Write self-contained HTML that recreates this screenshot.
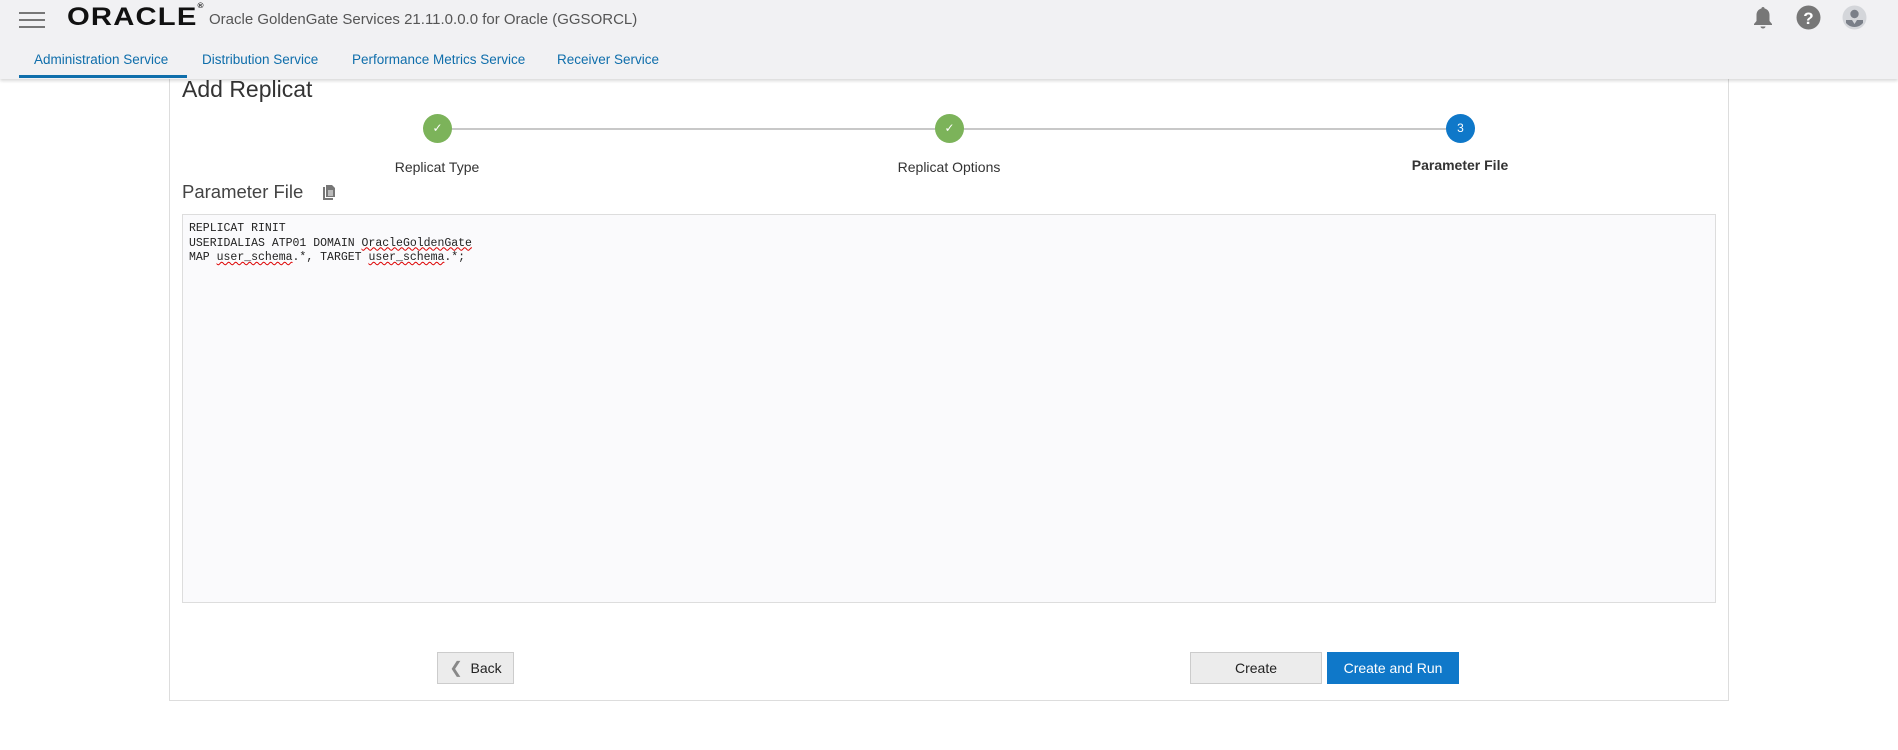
<!DOCTYPE html>
<html><head><meta charset="utf-8"><style>
*{box-sizing:border-box;margin:0;padding:0}
body{width:1898px;height:750px;background:#fff;font-family:"Liberation Sans",sans-serif;position:relative;overflow:hidden;color:#333}
.hdr{position:absolute;left:0;top:0;width:1898px;height:79px;background:#f1f1f3;box-shadow:0 2px 3px rgba(0,0,0,.15);z-index:2}
.abs{position:absolute}
.tab{position:absolute;top:52px;font-size:13.5px;color:#0f6eab;white-space:nowrap}
.panel{position:absolute;left:169px;top:60px;width:1560px;height:641px;border:1px solid #ddd;background:#fff}
.circ{position:absolute;width:29px;height:29px;border-radius:50%;top:114px;color:#fff;font-size:12px;text-align:center;line-height:29px}
.lbl{position:absolute;top:159px;font-size:14px;color:#333;transform:translateX(-50%);white-space:nowrap}
.ta{position:absolute;left:182px;top:214px;width:1534px;height:389px;border:1px solid #ddd;background:#fafafc;font-family:"Liberation Mono",monospace;font-size:11.5px;line-height:14.5px;padding:7px 6px;color:#222}
.sq{text-decoration:underline wavy #d00;text-decoration-thickness:1px}
.btn{position:absolute;top:652px;height:32px;font-size:14px;text-align:center;line-height:31px;border:1px solid #ccc;background:#ececec;color:#222}
</style></head><body>
<div class="hdr">
 <div class="abs" style="left:19px;top:12px;width:26px">
  <div style="height:2px;background:#777;margin-top:0"></div><div style="height:2px;background:#777;margin-top:5px"></div><div style="height:2px;background:#777;margin-top:5px"></div>
 </div>
 <div class="abs" style="left:67px;top:3px;font-size:25px;font-weight:bold;letter-spacing:1px;color:#111;transform:scaleX(1.17);transform-origin:left">ORACLE<span style="font-size:7px;vertical-align:top">®</span></div>
 <div class="abs" style="left:209px;top:11px;font-size:15px;color:#555">Oracle GoldenGate Services 21.11.0.0.0 for Oracle (GGSORCL)</div>
 <div class="tab" style="left:34px">Administration Service</div>
 <div class="tab" style="left:202px">Distribution Service</div>
 <div class="tab" style="left:352px">Performance Metrics Service</div>
 <div class="tab" style="left:557px">Receiver Service</div>
 <div class="abs" style="left:19px;top:75px;width:168px;height:3px;background:#0f6eab"></div>
 <svg class="abs" style="left:1751px;top:5px" width="24" height="26" viewBox="0 0 24 26"><path d="M12 2c-1 0-1.6.7-1.6 1.5C7 4.4 5.5 7 5.5 10v6L3 19v1h18v-1l-2.5-3v-6c0-3-1.5-5.6-4.9-6.5C13.6 2.7 13 2 12 2z" fill="#777"/><path d="M9.5 21.5a2.5 2 0 0 0 5 0z" fill="#777"/></svg>
 <svg class="abs" style="left:1796px;top:5px" width="25" height="25" viewBox="0 0 25 25"><circle cx="12.5" cy="12.5" r="12" fill="#777"/><text x="12.5" y="19" text-anchor="middle" font-family="Liberation Sans" font-weight="bold" font-size="17" fill="#fff">?</text></svg>
 <svg class="abs" style="left:1842px;top:5px" width="25" height="25" viewBox="0 0 25 25"><circle cx="12.5" cy="12.5" r="12" fill="#d4d6da"/><circle cx="12.5" cy="9" r="4.2" fill="#7a7f88"/><path d="M4 15h6l2.5 4 2.5-4h6v3a11 11 0 0 1-17 0z" fill="#7a7f88"/></svg>
</div>
<div class="panel"></div>
<div class="abs" style="left:182px;top:76px;font-size:23px;color:#333">Add Replicat</div>
<div class="abs" style="left:451px;top:128px;width:998px;height:2px;background:#c8c8c8"></div>
<div class="circ" style="left:423px;background:#7cb35a">✓</div>
<div class="circ" style="left:935px;background:#7cb35a">✓</div>
<div class="circ" style="left:1446px;background:#0f78c9">3</div>
<div class="lbl" style="left:437px">Replicat Type</div>
<div class="lbl" style="left:949px">Replicat Options</div>
<div class="lbl" style="left:1460px;top:157px;font-weight:bold">Parameter File</div>
<div class="abs" style="left:182px;top:181px;font-size:18.5px;color:#444">Parameter File</div>
<svg class="abs" style="left:322px;top:184px" width="14" height="17" viewBox="0 0 14 17"><path d="M1 3h2v11h8v2H1z" fill="#777"/><path d="M4 1h6l3 3v9H4z" fill="#777"/><path d="M6 7h5M6 9h5M6 11h5" stroke="#fff" stroke-width="1"/></svg>
<div class="ta">REPLICAT RINIT<br>USERIDALIAS ATP01 DOMAIN <span class="sq">OracleGoldenGate</span><br>MAP <span class="sq">user_schema</span>.*, TARGET <span class="sq">user_schema</span>.*;</div>
<div class="btn" style="left:437px;width:77px"><span style="color:#888;font-size:16px">&#10094;</span>&nbsp; Back</div>
<div class="btn" style="left:1190px;width:132px">Create</div>
<div class="btn" style="left:1327px;width:132px;background:#0f78c9;border-color:#0f78c9;color:#fff">Create and Run</div>
</body></html>
